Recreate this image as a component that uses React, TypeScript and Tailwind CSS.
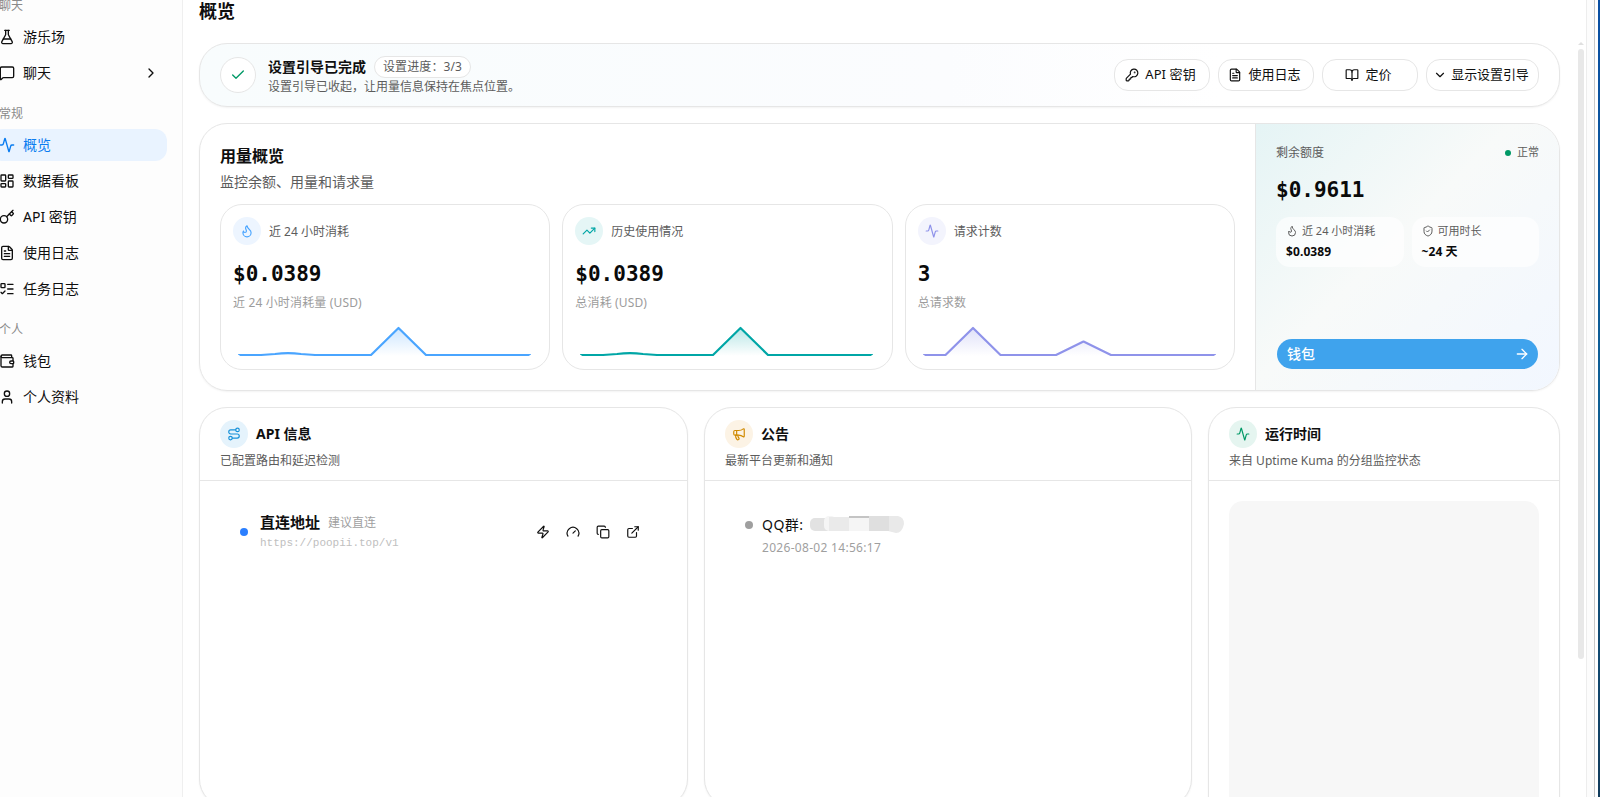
import type { ReactNode } from "react";
import {
  Activity, ArrowRight, BookOpen, Check, ChevronDown, ChevronRight, Copy, ExternalLink, FileText, Flame, FlaskConical,
  Gauge, Key, KeyRound, LayoutDashboard, ListTodo, Megaphone, MessageSquare, Route, ShieldCheck, TrendingUp, User, Wallet, Zap,
} from "lucide-react";

const MONO = "font-['DejaVu_Sans_Mono',monospace]";

function NavItem({ icon, label, active, chevron }: { icon: ReactNode; label: string; active?: boolean; chevron?: boolean }) {
  return (
    <div className={`flex h-8 items-center gap-2 rounded-xl px-2 text-sm ${active ? "bg-[#e9f3ff] text-[#0a7cf0]" : "text-[#0f0f0f]"}`}>
      {icon}
      <span className="flex-1 whitespace-nowrap">{label}</span>
      {chevron && <ChevronRight size={16} />}
    </div>
  );
}

function NavLabel({ children }: { children: ReactNode }) {
  return <div className="flex h-8 items-center px-2 pt-0.5 text-xs text-[#8a8a8a]">{children}</div>;
}

function Pill({ icon, label, className }: { icon: ReactNode; label: string; className: string }) {
  return (
    <div className={`flex h-8 items-center justify-center rounded-[14px] border border-[#e6e6e6] bg-white pr-[3px] text-[13px] text-[#0f0f0f] whitespace-nowrap ${className}`}>
      {icon}
      {label}
    </div>
  );
}

function Spark({ id, color, line }: { id: string; color: string; line: string }) {
  return (
    <svg width="293" height="32" viewBox="0 0 293 32" className="ml-[5px] block">
      <defs>
        <linearGradient id={id} x1="0" y1="0" x2="0" y2="1">
          <stop offset="0" stopColor={color} stopOpacity="0.28" />
          <stop offset="1" stopColor={color} stopOpacity="0" />
        </linearGradient>
        <clipPath id={`${id}-clip`}>
          <path d="M0 0H293V28.500Q291 30.500 288 30.500H5Q2 30.500 0 28.500Z" />
        </clipPath>
      </defs>
      <g clipPath={`url(#${id}-clip)`}>
        <path d={`${line}V30H0Z`} fill={`url(#${id})`} />
        <path d={line} fill="none" stroke={color} strokeWidth="2.200" strokeLinejoin="round" />
      </g>
    </svg>
  );
}

function Stat({ icon, tint, label, value, note, children }: { icon: ReactNode; tint: string; label: string; value: string; note: string; children: ReactNode }) {
  return (
    <div className="h-[166px] rounded-[22px] border border-[#e6e6e6] p-3">
      <div className="flex items-center gap-2">
        <span className={`flex size-7 items-center justify-center rounded-full ${tint}`}>{icon}</span>
        <span className="pt-0.5 text-xs text-[#5c5c5c]">{label}</span>
      </div>
      <div className={`mt-[13px] h-8 text-[21px] leading-8 font-bold text-[#0a0a0a] ${MONO}`}>{value}</div>
      <div className="mt-[5px] h-4 text-xs leading-4 tracking-[0.15px] text-[#9c9c9c]">{note}</div>
      <div className="mt-[14.5px]">{children}</div>
    </div>
  );
}

function Panel({ icon, tint, title, note, className, children }: { icon: ReactNode; tint: string; title: string; note: string; className: string; children: ReactNode }) {
  return (
    <section className={`shrink-0 rounded-[28px] border border-[#e6e6e6] bg-white shadow-[0_1px_2px_rgba(0,0,0,0.05)] ${className}`}>
      <header className="h-[73px] border-b border-[#e6e6e6] px-5 pt-3">
        <div className="flex items-center gap-2">
          <span className={`flex size-7 items-center justify-center rounded-full ${tint}`}>{icon}</span>
          <h3 className="text-sm font-bold text-[#0f0f0f]">{title}</h3>
        </div>
        <p className="mt-[5px] text-xs leading-4 text-[#5c5c5c]">{note}</p>
      </header>
      {children}
    </section>
  );
}

function MiniBox({ icon, label, value }: { icon: ReactNode; label: string; value: string }) {
  return (
    <div className="h-[50px] rounded-[14px] bg-white/65 px-2.5 pt-1.5">
      <div className="flex h-4 items-center gap-1 text-[11px] text-[#5c5c5c] whitespace-nowrap">{icon}{label}</div>
      <div className="mt-[5px] text-xs leading-4 font-bold tracking-[0.1px] text-[#0a0a0a]">{value}</div>
    </div>
  );
}

export default function App() {
  return (
    <div className="flex h-[797px] w-[1600px] overflow-hidden bg-white font-['Noto_Sans','Noto_Sans_CJK_SC',sans-serif]">
      <nav className="h-full w-[183px] shrink-0 border-r border-[#efefef] bg-[#fdfdfd]">
        <div className="-mt-[11px] -ml-[9px] flex w-44 flex-col gap-1">
          <div className="-mb-1"><NavLabel>聊天</NavLabel></div>
          <NavItem icon={<FlaskConical size={16} />} label="游乐场" />
          <NavItem icon={<MessageSquare size={16} />} label="聊天" chevron />
          <div className="mt-1 -mb-1"><NavLabel>常规</NavLabel></div>
          <NavItem icon={<Activity size={16} />} label="概览" active />
          <NavItem icon={<LayoutDashboard size={16} />} label="数据看板" />
          <NavItem icon={<Key size={16} />} label="API 密钥" />
          <NavItem icon={<FileText size={16} />} label="使用日志" />
          <NavItem icon={<ListTodo size={16} />} label="任务日志" />
          <div className="mt-1 -mb-1"><NavLabel>个人</NavLabel></div>
          <NavItem icon={<Wallet size={16} />} label="钱包" />
          <NavItem icon={<User size={16} />} label="个人资料" />
        </div>
      </nav>

      <main className="flex w-[1377px] shrink-0 flex-col pl-4">
        <h1 className="h-[43px] shrink-0 text-lg leading-[23px] font-bold text-[#0f0f0f]">概览</h1>

        <section className="flex h-16 shrink-0 items-center rounded-[28px] border border-[#e6e6e6] bg-[linear-gradient(90deg,#f8fcfd,#fbfcfe_55%,#ffffff_75%)] px-5 shadow-[0_1px_2px_rgba(0,0,0,0.05)]">
          <span className="flex size-9 items-center justify-center rounded-full border border-[#e6e6e6] bg-white">
            <Check size={16} className="text-[#009966]" />
          </span>
          <div className="ml-3 pt-px">
            <div className="flex h-[22px] items-center">
              <h2 className="text-sm font-bold text-[#0f0f0f]">设置引导已完成</h2>
              <span className="ml-2 flex h-[22px] w-[97px] items-center rounded-full border border-[#e6e6e6] bg-white px-2 text-xs tracking-[0.1px] text-[#5c5c5c] whitespace-nowrap">设置进度：3/3</span>
            </div>
            <p className="text-xs leading-[18px] text-[#5c5c5c]">设置引导已收起，让用量信息保持在焦点位置。</p>
          </div>
          <div className="ml-auto flex gap-2">
            <Pill icon={<KeyRound size={14} />} label="API 密钥" className="w-24 gap-1.5 tracking-[0.1px]" />
            <Pill icon={<FileText size={14} />} label="使用日志" className="w-24 gap-1.5" />
            <Pill icon={<BookOpen size={14} />} label="定价" className="w-24 gap-1.5" />
            <Pill icon={<ChevronDown size={14} />} label="显示设置引导" className="w-[113px] gap-1 tracking-[-0.1px]" />
          </div>
        </section>

        <section className="mt-4 flex h-[268px] shrink-0 overflow-hidden rounded-[28px] border border-[#e6e6e6] shadow-[0_1px_2px_rgba(0,0,0,0.05)]">
          <div className="w-[1056px] border-r border-[#e6e6e6] px-5 pt-5">
            <h2 className="text-base leading-6 font-bold text-[#0f0f0f]">用量概览</h2>
            <p className="mt-1 text-sm leading-5 text-[#5c5c5c]">监控余额、用量和请求量</p>
            <div className="mt-3 grid grid-cols-3 gap-3">
              <Stat icon={<Flame size={14} className="text-[#4aa5ff]" />} tint="bg-[#edf5ff]" label="近 24 小时消耗" value="$0.0389" note="近 24 小时消耗量 (USD)">
                <Spark id="spend" color="#4aa5ff" line="M0 29H23L37 28Q50 26.400 63 28L77 29H133L160.500 2L188 29H293" />
              </Stat>
              <Stat icon={<TrendingUp size={14} className="text-[#00a6a6]" />} tint="bg-[#e5f6f6]" label="历史使用情况" value="$0.0389" note="总消耗 (USD)">
                <Spark id="history" color="#00a6a6" line="M0 29H23L37 28Q50 26.400 63 28L77 29H133L160.500 2L188 29H293" />
              </Stat>
              <Stat icon={<Activity size={14} className="text-[#8f93ea]" />} tint="bg-[#f3f4fd]" label="请求计数" value="3" note="总请求数">
                <Spark id="requests" color="#8f93ea" line="M0 29H22.500L50 2L77.500 29H133L160.500 15.500L188 29H293" />
              </Stat>
            </div>
          </div>
          <div className="flex flex-1 flex-col bg-[linear-gradient(135deg,#e5f4f5,#f8faf9_45%,#f2f7ff)] px-5 pt-5 pb-[21px]">
            <div className="flex h-[18px] items-center justify-between text-xs text-[#5c5c5c]">
              <span>剩余额度</span>
              <span className="flex items-center gap-1.5 pb-px text-[11px]"><i className="size-1.5 rounded-full bg-[#009966]" />正常</span>
            </div>
            <div className={`mt-3 h-8 text-[21px] leading-8 font-bold text-[#0a0a0a] ${MONO}`}>$0.9611</div>
            <div className="mt-[11px] grid grid-cols-2 gap-2">
              <MiniBox icon={<Flame size={12} />} label="近 24 小时消耗" value="$0.0389" />
              <MiniBox icon={<ShieldCheck size={12} />} label="可用时长" value="~24 天" />
            </div>
            <div className="mx-px mt-auto flex h-[30px] items-center justify-between rounded-full bg-[#3fa3ed] px-2.5 text-sm font-medium text-white">
              钱包<ArrowRight size={16} className="-mr-0.5" />
            </div>
          </div>
        </section>

        <div className="mt-4 flex shrink-0 items-start gap-4">
          <Panel icon={<Route size={14} className="text-[#1791d9]" />} tint="bg-[#e5f3fc]" title="API 信息" note="已配置路由和延迟检测" className="h-[400px] w-[489px]">
            <div className="flex items-center pt-[31px] pr-[47px] pl-10">
              <i className="size-2 rounded-full bg-[#2b7fff]" />
              <div className="ml-3">
                <div className="flex h-5 items-center gap-2">
                  <b className="text-[15px] text-[#0f0f0f]">直连地址</b>
                  <span className="pt-px text-xs text-[#a0a0a0]">建议直连</span>
                </div>
                <div className="h-5 font-['Liberation_Mono',monospace] text-[11px] leading-[23px] text-[#c0c0c0]">https://poopii.top/v1</div>
              </div>
              <div className="ml-auto flex gap-4 text-[#0f0f0f]">
                <Zap size={14} /><Gauge size={14} /><Copy size={14} /><ExternalLink size={14} />
              </div>
            </div>
          </Panel>
          <Panel icon={<Megaphone size={14} className="text-[#d08a00]" />} tint="bg-[#fcf3e5]" title="公告" note="最新平台更新和通知" className="h-[400px] w-[488px]">
            <div className="flex gap-[9px] pt-8 pl-10">
              <i className="mt-2 size-2 rounded-full bg-[#9f9f9f]" />
              <div>
                <div className="flex h-[22px] items-center text-sm text-[#0f0f0f]">
                  <span className="pt-px tracking-[0.5px]">QQ群:</span>
                  <svg width="94" height="17" viewBox="0 0 94 17" className="ml-1.5">
                    <rect y="2" width="24" height="13" rx="5" fill="#e2e2e2" />
                    <rect x="14" width="12" height="15" rx="5" fill="#f5f5f5" />
                    <rect x="19" y="1" width="21" height="14" fill="#eaeaea" />
                    <rect x="39" y="0" width="20" height="15" fill="#f5f5f5" />
                    <rect x="39" y="0" width="20" height="2" fill="#c4c4c4" />
                    <path d="M79 0H88Q94 1 94 8Q92 17 86 17L78 15Z" fill="#e9e9e9" />
                    <rect x="59" width="20" height="15" fill="#dfdfdf" />
                  </svg>
                </div>
                <div className="text-xs leading-[26px] tracking-[0.3px] text-[#9f9f9f]">2026-08-02 14:56:17</div>
              </div>
            </div>
          </Panel>
          <Panel icon={<Activity size={14} className="text-[#009966]" />} tint="bg-[#e5f5f0]" title="运行时间" note="来自 Uptime Kuma 的分组监控状态" className="h-[450px] w-[352px]">
            <div className="mx-5 mt-5 h-[336px] rounded-[14px] bg-[#f7f7f7]" />
          </Panel>
        </div>
      </main>

      <aside className="flex flex-1">
        <div className="flex w-[27px] flex-col items-end border-r border-[#ededed] pt-[42px] pr-0.5">
          <svg width="6" height="3" viewBox="0 0 6 3"><path d="M0 3L3 0L6 3Z" fill="#e0e0e0" /></svg>
          <div className="mt-1 h-[610px] w-1.5 rounded-full bg-[#e8e8e8]" />
        </div>
        <div className="w-2 border-r border-[#c9c9c9] bg-[#fcfcfc]" />
        <div className="flex-1" />
        <div className="w-[2px] bg-[linear-gradient(180deg,#0a4fa3,#0f6095_50%,#123c5c)]" />
      </aside>
    </div>
  );
}
